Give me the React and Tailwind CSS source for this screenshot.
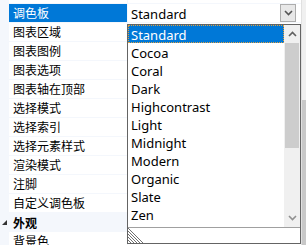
import React from 'react';

const rows = [
  { name: '图表标题' },
  { name: '调色板', value: 'Standard', selected: true },
  { name: '图表区域' },
  { name: '图表图例' },
  { name: '图表选项' },
  { name: '图表轴在顶部' },
  { name: '选择模式' },
  { name: '选择索引' },
  { name: '选择元素样式' },
  { name: '渲染模式' },
  { name: '注脚' },
  { name: '自定义调色板' },
  { name: '外观', category: true },
  { name: '背景色' },
];

const palettes = [
  'Standard', 'Cocoa', 'Coral', 'Dark', 'Highcontrast', 'Light',
  'Midnight', 'Modern', 'Organic', 'Slate', 'Zen',
];

function Chevron({ up, className }) {
  return (
    <svg width="9" height="6" viewBox="0 0 9 6" className={className}>
      <path
        d={up ? 'M1 5 L4.5 1.5 L8 5' : 'M1 1 L4.5 4.5 L8 1'}
        fill="none"
        stroke="currentColor"
        strokeWidth="1.6"
      />
    </svg>
  );
}

function Row({ row }) {
  if (row.category) {
    return (
      <div className="flex h-[19px] shrink-0 items-center bg-[#f4f7fc]">
        <div className="w-[9px] h-full flex items-center justify-center">
          <svg width="5" height="5" viewBox="0 0 5 5">
            <path d="M5 0 L5 5 L0 5 Z" fill="#333" />
          </svg>
        </div>
        <span className="pl-[4px] pt-[2px] font-bold text-black">{row.name}</span>
      </div>
    );
  }
  return (
    <div className="flex h-[19px] shrink-0">
      <div className="w-[9px] h-full bg-[#f4f7fc]" />
      <div className="flex flex-1 h-full flex-col">
        <div className="flex h-[18px]">
          <div
            className={
              row.selected
                ? 'w-[118px] pl-[4px] pt-[2px] flex items-center bg-[#0078d7] text-white'
                : 'w-[118px] pl-[4px] pt-[2px] flex items-center text-black'
            }
          >
            {row.name}
          </div>
          <div className="w-px bg-[#f4f7fc]" />
          <div className="flex flex-1 items-center pl-[3px] text-black">
            <span className="text-[13px] pt-[2px]">{row.value}</span>
            {row.selected && (
              <div className="ml-auto mr-[5px] w-[16px] h-[18px] border border-[#adadad] bg-[#e8e8e8] flex items-center justify-center text-[#555]">
                <Chevron />
              </div>
            )}
          </div>
        </div>
        <div className="h-px bg-[#f4f7fc]" />
      </div>
    </div>
  );
}

export default function App() {
  return (
    <div
      className="relative w-[306px] h-[245px] overflow-hidden bg-white text-[12px] leading-none"
      style={{ fontFamily: '"Noto Sans", "Noto Sans CJK SC", sans-serif' }}
    >
      <div className="flex h-full">
        <div className="flex flex-1 flex-col -mt-[15px]">
          {rows.map((r) => (
            <Row key={r.name} row={r} />
          ))}
        </div>
        {/* grid scrollbar */}
        <div className="w-[5px] h-full flex flex-col border-l border-[#e0e0e0] bg-[#f0f0f0]">
          <div className="h-[100px]" />
          <div className="flex-1 bg-[#c8c8c8]" />
        </div>
      </div>

      {/* dropdown list */}
      <div className="absolute left-[127px] top-[24px] w-[174px] h-[220px] border border-[#646464] bg-white flex flex-col text-[13px]">
        <div className="flex h-[202px]">
          <div className="flex-1 flex flex-col">
            {palettes.map((p, i) => (
              <div
                key={p}
                className={
                  i === 0
                    ? 'h-[18px] flex items-center pl-[3px] pt-[2px] bg-[#0078d7] text-white outline outline-1 outline-dotted outline-[#e0a040] -outline-offset-1'
                    : 'h-[18px] flex items-center pl-[3px] pt-[2px] text-black'
                }
              >
                {p}
              </div>
            ))}
          </div>
          <div className="w-[16px] h-full bg-[#f0f0f0] flex flex-col">
            <div className="h-[18px] flex items-center justify-center text-[#606060]">
              <Chevron up />
            </div>
            <div className="h-[105px] mx-px bg-[#cdcdcd]" />
            <div className="flex-1" />
            <div className="h-[18px] flex items-center justify-center text-[#909090]">
              <Chevron />
            </div>
          </div>
        </div>
        <div className="h-px bg-[#a0a0a0]" />
        <div className="flex-1 flex items-end">
          <svg width="15" height="15" viewBox="0 0 15 15">
            {[0, 3, 6, 9, 12].map((o) => (
              <line key={o} x1={0} y1={o} x2={15 - o} y2={15} stroke="#707070" strokeWidth="1" />
            ))}
          </svg>
        </div>
      </div>
    </div>
  );
}
